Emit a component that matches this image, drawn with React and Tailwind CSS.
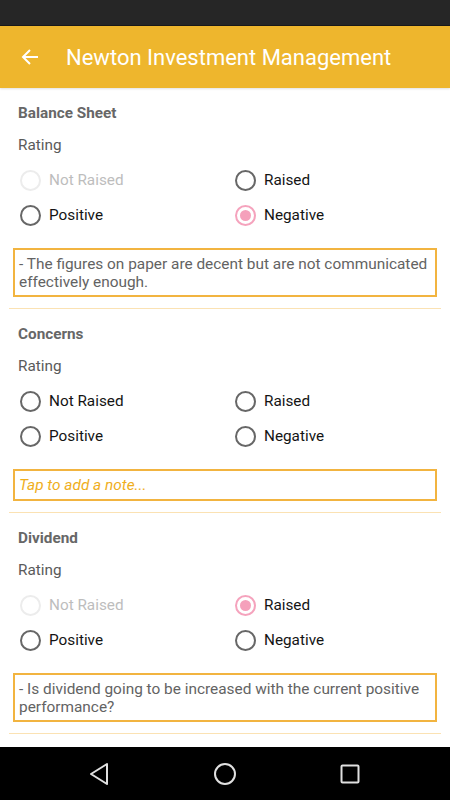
import React, { useState } from 'react';

const OPTIONS = ['Not Raised', 'Raised', 'Positive', 'Negative'];

const SECTIONS = [
  {
    id: 'balance',
    title: 'Balance Sheet',
    value: 'Negative',
    disabled: ['Not Raised'],
    note: '- The figures on paper are decent but are not communicated effectively enough.',
  },
  { id: 'concerns', title: 'Concerns', value: null, disabled: [], note: '' },
  {
    id: 'dividend',
    title: 'Dividend',
    value: 'Raised',
    disabled: ['Not Raised'],
    note: '- Is dividend going to be increased with the current positive performance?',
  },
];

function Radio({ label, checked, disabled, onSelect }) {
  return (
    <button
      type="button"
      disabled={disabled}
      onClick={onSelect}
      className="flex h-[35px] items-center text-left"
    >
      <span
        className={`flex h-[21px] w-[21px] items-center justify-center rounded-full border-2 ${
          disabled ? 'border-[#ececec]' : checked ? 'border-[#f5a3bd]' : 'border-[#676767]'
        }`}
      >
        {checked && <span className="h-[11px] w-[11px] rounded-full bg-[#f5a0bb]" />}
      </span>
      <span
        className={`ml-[8px] text-[15.3px] ${disabled ? 'text-[#bdbdbd]' : 'text-[#141414]'}`}
      >
        {label}
      </span>
    </button>
  );
}

function Section({ section }) {
  const [value, setValue] = useState(section.value);

  return (
    <div className="border-b border-[#fbe2b3] pt-[15px] pb-[11px]">
      <h2 className="pl-[9px] text-[15.3px] leading-[20px] font-bold text-[#676767]">
        {section.title}
      </h2>
      <p className="mt-[12px] pl-[9px] text-[15.3px] leading-[20px] text-[#5a5a5a]">Rating</p>
      <div className="mt-[8px] grid grid-cols-[215px_1fr] pl-[11px]">
        {OPTIONS.map((opt) => (
          <Radio
            key={opt}
            label={opt}
            checked={value === opt}
            disabled={section.disabled.includes(opt)}
            onSelect={() => setValue(opt)}
          />
        ))}
      </div>
      <div className="mx-[4px] mt-[15px] border-2 border-[#f2b440] px-[4px] py-[4.5px] text-[15.4px] leading-[18px]">
        {section.note ? (
          <p className="text-[#636363]">{section.note}</p>
        ) : (
          <p className="py-[0.5px] italic text-[#efae1c]">Tap to add a note...</p>
        )}
      </div>
    </div>
  );
}

export default function App() {
  return (
    <div
      className="flex h-[800px] w-[450px] flex-col overflow-hidden bg-white"
      style={{ fontFamily: 'Roboto, "Noto Sans", sans-serif' }}
    >
      {/* status bar */}
      <div className="h-[26px] shrink-0 border-b border-[#1a1a1a] bg-[#262626]" />

      {/* toolbar */}
      <div className="relative z-10 flex h-[62px] shrink-0 items-center bg-[#eeb62d] shadow-[0_1px_2px_rgba(0,0,0,0.12)]">
        <svg
          className="ml-[21px]"
          width="18"
          height="18"
          viewBox="0 0 18 18"
          fill="none"
          stroke="white"
          strokeWidth="2"
        >
          <path d="M17 9H2M9 2L2 9l7 7" />
        </svg>
        <h1 className="ml-[27px] text-[22px] text-white">Newton Investment Management</h1>
      </div>

      {/* content */}
      <div className="flex-1 overflow-hidden px-[9px]">
        {SECTIONS.map((s) => (
          <Section key={s.id} section={s} />
        ))}
      </div>

      {/* nav bar */}
      <div className="flex h-[53px] shrink-0 items-center justify-between bg-black pl-[89px] pr-[90px]">
        <svg width="20" height="24" viewBox="0 0 20 24" fill="none" stroke="#e0e0e0" strokeWidth="2" strokeLinejoin="round">
          <path d="M18 2L2 12l16 10z" />
        </svg>
        <svg width="24" height="24" viewBox="0 0 24 24" fill="none" stroke="#e0e0e0" strokeWidth="2">
          <circle cx="12" cy="12" r="10" />
        </svg>
        <svg width="20" height="20" viewBox="0 0 20 20" fill="none" stroke="#e0e0e0" strokeWidth="2">
          <rect x="1.5" y="1.5" width="17" height="17" rx="1" />
        </svg>
      </div>
    </div>
  );
}
